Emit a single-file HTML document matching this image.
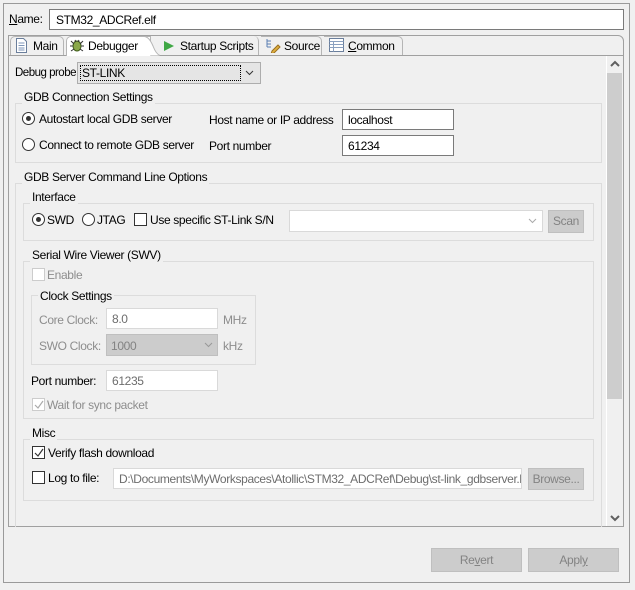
<!DOCTYPE html>
<html><head><meta charset="utf-8"><style>
*{box-sizing:border-box;margin:0;padding:0}
body{width:635px;height:590px;background:#f0f0f0;font-family:"Liberation Sans",sans-serif;font-size:12px;letter-spacing:-0.35px;color:#000;position:relative;overflow:hidden}
.a{position:absolute}
.t{position:absolute;white-space:nowrap;line-height:14px}
.box{position:absolute;border:1px solid #7a7a7a;background:#fff}
.dis{border-color:#d9d9d9;color:#6d6d6d}
.grp{position:absolute;border:1px solid #dcdcdc}
.gt{position:absolute;background:#f0f0f0;padding:0 2px;line-height:14px;white-space:nowrap}
.rad{position:absolute;width:13px;height:13px;border:1px solid #333;border-radius:50%;background:#fff}
.chk{position:absolute;width:13px;height:13px;border:1px solid #333;background:#fff}
.btn{position:absolute;background:#cccccc;border:1px solid #bfbfbf;color:#838383;text-align:center;line-height:20px}
.g{color:#8d8d8d}
</style></head><body>
<div class="a" style="left:3px;top:3px;width:627px;height:580px;border:1px solid #9a9a9a"></div>
<div class="t" style="left:9px;top:12px"><u>N</u>ame:</div>
<div class="box" style="left:49px;top:9px;width:575px;height:21px;border-color:#7a7a7a"><span class="t" style="left:6px;top:3px">STM32_ADCRef.elf</span></div>

<div class="a" style="left:8px;top:35px;width:616px;height:492px;border:1px solid #a0a0a0;border-radius:0 6px 0 0"></div>
<div class="a" style="left:9px;top:55px;width:614px;height:1px;background:#a0a0a0"></div>
<div class="a" style="left:10px;top:36px;width:54px;height:19px;border:1px solid #b5b5b5;border-bottom:none;border-radius:5px 5px 0 0"></div>
<div class="a" style="left:66px;top:36px;width:85px;height:20px;background:#fff;border:1px solid #b5b5b5;border-bottom:none;border-radius:5px 0 0 0"></div>
<svg class="a" style="left:144px;top:36px" width="16" height="21"><path d="M0 0.5 Q5 0.5 9 10 Q12 18 16 19.5 L0 19.5Z" fill="#fff" stroke="none"/><path d="M0 0.5 Q5 0.5 9 10 Q12 18 16 19.5" fill="none" stroke="#b5b5b5"/></svg>
<div class="a" style="left:159px;top:36px;width:100px;height:19px;border-right:1px solid #b5b5b5;border-radius:0 5px 0 0"></div>
<div class="a" style="left:261px;top:36px;width:61px;height:19px;border:1px solid #b5b5b5;border-bottom:none;border-left:none;border-radius:0 5px 0 0"></div>
<div class="a" style="left:324px;top:36px;width:79px;height:19px;border:1px solid #b5b5b5;border-bottom:none;border-left:none;border-radius:0 5px 0 0"></div>
<svg class="a" style="left:15px;top:38px" width="13" height="15"><path d="M1.5 .5h7l3 3v11h-10z" fill="#fff" stroke="#6b7f9c"/><path d="M3.5 5h6M3.5 7.5h6M3.5 10h6M3.5 12h6" stroke="#7e96b8"/></svg>
<div class="t" style="left:33px;top:39px">Main</div>
<svg class="a" style="left:69px;top:38px" width="15" height="15"><ellipse cx="8" cy="8" rx="4" ry="5" fill="#8aa84a" stroke="#3e5a1a"/><path d="M2 3l3 3M14 3l-3 3M1 8h3M12 8h3M2 13l3-2M14 13l-3-2M6 2l1 2M10 2l-1 2" stroke="#333"/></svg>
<div class="t" style="left:88px;top:39px">Debugger</div>
<svg class="a" style="left:163px;top:40px" width="12" height="12"><path d="M1 1l10 5-10 5z" fill="#3fa845"/></svg>
<div class="t" style="left:180px;top:39px">Startup Scripts</div>
<svg class="a" style="left:265px;top:38px" width="16" height="15"><path d="M2 1v8M2 3h4M2 6h4M2 9h4" stroke="#5b7fb3"/><path d="M7 13l6-6 2 2-6 6-3 1z" fill="#e0b040" stroke="#9a7020"/></svg>
<div class="t" style="left:284px;top:39px">Source</div>
<svg class="a" style="left:329px;top:38px" width="15" height="14"><rect x=".5" y=".5" width="14" height="13" fill="#fff" stroke="#6b7f9c"/><path d="M.5 3.5h14M4.5 3.5v10M.5 6.5h14M.5 9.5h14" stroke="#8aa0c0"/></svg>
<div class="t" style="left:348px;top:39px"><u>C</u>ommon</div>

<div class="t" style="left:15px;top:66px;font-size:11.5px;letter-spacing:-0.5px">Debug probe</div>
<div class="a" style="left:77px;top:62px;width:184px;height:22px;background:#e5e5e5;border:1px solid #adadad"></div>
<div class="a" style="left:80px;top:65px;width:161px;height:16px;border:1px dotted #000"></div>
<div class="t" style="left:82px;top:66px">ST-LINK</div>
<svg class="a" style="left:245px;top:70px" width="9" height="6"><path d="M1 1l3.5 3.5L8 1" fill="none" stroke="#333"/></svg>

<div class="grp" style="left:15px;top:103px;width:587px;height:60px"></div>
<div class="gt" style="left:22px;top:90px">GDB Connection Settings</div>
<div class="rad" style="left:22px;top:112px"></div><div class="a" style="left:26px;top:116px;width:5px;height:5px;border-radius:50%;background:#333"></div>
<div class="t" style="left:39px;top:112px">Autostart local GDB server</div>
<div class="rad" style="left:22px;top:138px"></div>
<div class="t" style="left:39px;top:138px">Connect to remote GDB server</div>
<div class="t" style="left:209px;top:113px">Host name or IP address</div>
<div class="box" style="left:342px;top:109px;width:112px;height:21px"><span class="t" style="left:5px;top:3px">localhost</span></div>
<div class="t" style="left:209px;top:139px">Port number</div>
<div class="box" style="left:342px;top:135px;width:112px;height:21px"><span class="t" style="left:5px;top:3px">61234</span></div>

<div class="grp" style="left:15px;top:183px;width:587px;height:360px"></div>
<div class="gt" style="left:22px;top:170px">GDB Server Command Line Options</div>

<div class="grp" style="left:23px;top:203px;width:571px;height:38px"></div>
<div class="gt" style="left:30px;top:190px">Interface</div>
<div class="rad" style="left:32px;top:213px"></div><div class="a" style="left:36px;top:217px;width:5px;height:5px;border-radius:50%;background:#333"></div>
<div class="t" style="left:47px;top:213px">SWD</div>
<div class="rad" style="left:82px;top:213px"></div>
<div class="t" style="left:97px;top:213px">JTAG</div>
<div class="chk" style="left:134px;top:213px"></div>
<div class="t" style="left:150px;top:213px">Use specific ST-Link S/N</div>
<div class="box" style="left:289px;top:210px;width:254px;height:22px;border-color:#d9d9d9"></div>
<svg class="a" style="left:528px;top:218px" width="9" height="6"><path d="M1 1l3.5 3.5L8 1" fill="none" stroke="#aaa"/></svg>
<div class="btn" style="left:548px;top:210px;width:36px;height:23px">Scan</div>

<div class="grp" style="left:23px;top:261px;width:571px;height:158px"></div>
<div class="gt" style="left:30px;top:248px">Serial Wire Viewer (SWV)</div>
<div class="chk" style="left:32px;top:268px;border-color:#ccc"></div>
<div class="t g" style="left:47px;top:268px">Enable</div>
<div class="grp" style="left:31px;top:295px;width:225px;height:70px"></div>
<div class="gt" style="left:38px;top:289px">Clock Settings</div>
<div class="t g" style="left:39px;top:313px">Core Clock:</div>
<div class="box dis" style="left:106px;top:308px;width:112px;height:21px"><span class="t" style="left:5px;top:3px">8.0</span></div>
<div class="t g" style="left:223px;top:313px">MHz</div>
<div class="t g" style="left:39px;top:339px">SWO Clock:</div>
<div class="a" style="left:106px;top:334px;width:112px;height:22px;background:#cccccc;border:1px solid #bfbfbf"><span class="t g" style="left:4px;top:4px;color:#838383">1000</span></div>
<svg class="a" style="left:204px;top:342px" width="9" height="6"><path d="M1 1l3.5 3.5L8 1" fill="none" stroke="#999"/></svg>
<div class="t g" style="left:223px;top:339px">kHz</div>
<div class="t" style="left:31px;top:374px">Port number:</div>
<div class="box dis" style="left:106px;top:370px;width:112px;height:21px"><span class="t" style="left:5px;top:3px">61235</span></div>
<div class="chk" style="left:32px;top:398px;border-color:#ccc"></div>
<svg class="a" style="left:33px;top:399px" width="12" height="12"><path d="M2 6l3 3 5-7" fill="none" stroke="#aaa" stroke-width="1.2"/></svg>
<div class="t g" style="left:47px;top:398px">Wait for sync packet</div>

<div class="grp" style="left:23px;top:439px;width:571px;height:62px"></div>
<div class="gt" style="left:30px;top:426px">Misc</div>
<div class="chk" style="left:32px;top:446px"></div>
<svg class="a" style="left:33px;top:447px" width="12" height="12"><path d="M2 6l3 3 5-7" fill="none" stroke="#333" stroke-width="1.2"/></svg>
<div class="t" style="left:48px;top:446px">Verify flash download</div>
<div class="chk" style="left:32px;top:471px"></div>
<div class="t" style="left:48px;top:471px">Log to file:</div>
<div class="box dis" style="left:113px;top:468px;width:409px;height:21px;overflow:hidden"><span class="t" style="left:5px;top:3px">D:\Documents\MyWorkspaces\Atollic\STM32_ADCRef\Debug\st-link_gdbserver.log</span></div>
<div class="btn" style="left:528px;top:468px;width:56px;height:22px">Browse...</div>

<div class="a" style="left:4px;top:527px;width:625px;height:18px;background:#f0f0f0"></div>

<div class="a" style="left:606px;top:56px;width:1px;height:470px;background:#fff"></div>
<div class="a" style="left:607px;top:56px;width:16px;height:470px;background:#f0f0f0"></div>
<svg class="a" style="left:610px;top:60px" width="10" height="8"><path d="M1 6l4-4 4 4" fill="none" stroke="#606060" stroke-width="2"/></svg>
<div class="a" style="left:607px;top:73px;width:15px;height:326px;background:#cdcdcd"></div>
<svg class="a" style="left:610px;top:514px" width="10" height="8"><path d="M1 2l4 4 4-4" fill="none" stroke="#606060" stroke-width="2"/></svg>

<div class="btn" style="left:431px;top:548px;width:91px;height:24px;line-height:22px">Re<u>v</u>ert</div>
<div class="btn" style="left:528px;top:548px;width:91px;height:24px;line-height:22px">Appl<u>y</u></div>
</body></html>
